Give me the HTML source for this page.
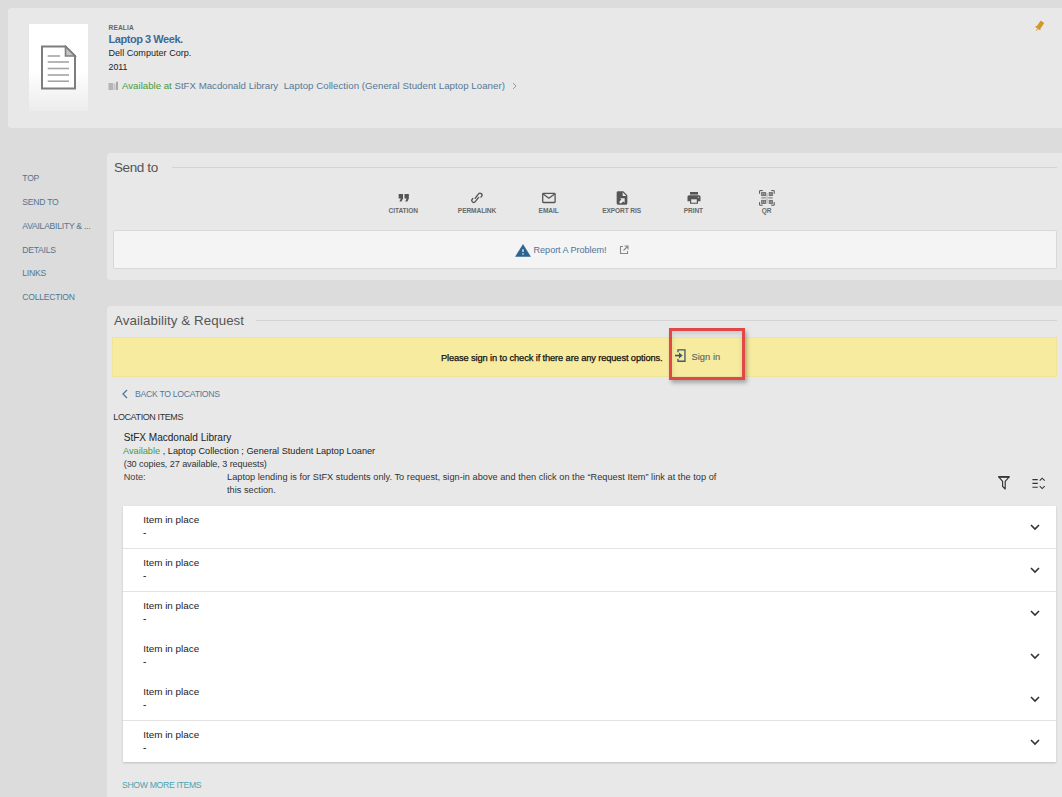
<!DOCTYPE html>
<html><head><meta charset="utf-8">
<style>
html,body{margin:0;padding:0;}
body{width:1062px;height:797px;overflow:hidden;background:#dcdcdc;position:relative;font-family:"Liberation Sans",sans-serif;color:#222;}
.a{position:absolute;white-space:nowrap;line-height:1;}
.card{position:absolute;background:#e8e8e8;border-radius:4px;}
.blue{color:#44709d;}
.green{color:#4a9a3a;}
.nav{position:absolute;left:22.3px;font-size:8.6px;color:#557590;line-height:1;letter-spacing:-0.25px;}
.ico{position:absolute;}
.lbl{position:absolute;font-size:6.6px;font-weight:bold;color:#6a6a6a;line-height:1;letter-spacing:-0.1px;transform:translateX(-50%);white-space:nowrap;}
.row{position:absolute;left:0;right:0;height:42px;}
.row .t{position:absolute;left:20.2px;top:9px;font-size:9.9px;line-height:1;color:#222;}
.row .d{position:absolute;left:20px;top:22px;font-size:10px;line-height:1;color:#222;}
.row svg{position:absolute;left:907px;top:18px;}
</style></head><body>

<!-- header card -->
<div class="card" style="left:8px;top:8px;width:1062px;height:120px;"></div>
<div style="position:absolute;left:29px;top:24px;width:59px;height:87px;background:linear-gradient(#fff 0%,#fff 55%,#ececec 100%);"></div>
<svg class="ico" style="left:40px;top:45px" width="37" height="46" viewBox="0 0 37 46">
  <path d="M2 1.5 H25.5 L35 11 V43.5 H2 Z" fill="#fff" stroke="#7d7d7d" stroke-width="2"/>
  <path d="M25.5 1.5 V11 H35 Z" fill="#c4c4c4" stroke="#7d7d7d" stroke-width="1.6"/>
  <g stroke="#a4a4a4" stroke-width="1.6">
    <line x1="7.7" y1="11" x2="20" y2="11"/>
    <line x1="7.7" y1="17" x2="29" y2="17"/>
    <line x1="7.7" y1="23.5" x2="29" y2="23.5"/>
    <line x1="7.7" y1="30" x2="29" y2="30"/>
    <line x1="7.7" y1="36.2" x2="29" y2="36.2"/>
  </g>
</svg>
<div class="a" style="left:108.5px;top:24.6px;font-size:6.6px;font-weight:bold;color:#666;letter-spacing:0.15px;">REALIA</div>
<div class="a" style="color:#3e6b98;left:108.5px;top:34px;font-size:11px;font-weight:bold;letter-spacing:-0.45px;">Laptop 3 Week.</div>
<div class="a" style="left:108.5px;top:49px;font-size:9.1px;letter-spacing:0px;">Dell Computer Corp.</div>
<div class="a" style="left:108.5px;top:63px;font-size:8.8px;">2011</div>
<svg class="ico" style="left:108px;top:81px" width="11" height="9" viewBox="0 0 11 9"><rect x="0.5" y="2" width="4.5" height="7" fill="#b4b4b4"/><rect x="5.5" y="2.5" width="2" height="6.5" fill="#c4c4c4"/><path d="M8 1 L10 0.5 V9 H8 Z" fill="#a8a8a8"/></svg>
<div class="a" style="left:122px;top:80.6px;font-size:9.7px;letter-spacing:-0.01px;"><span class="green">Available at </span><span style="color:#567896">StFX Macdonald Library</span></div>
<div class="a" style="left:283.7px;top:80.6px;font-size:9.7px;letter-spacing:0.03px;color:#567896;">Laptop Collection (General Student Laptop Loaner)</div>
<svg class="ico" style="left:512px;top:82px" width="5" height="8" viewBox="0 0 5 8"><path d="M1 1 L4 4 L1 7" fill="none" stroke="#999" stroke-width="1"/></svg>
<svg class="ico" style="left:1033px;top:19px" width="13" height="14" viewBox="0 0 13 14"><g transform="rotate(35 6.5 7)"><rect x="4.3" y="1.8" width="4.4" height="8" rx="0.8" fill="#d4982a"/><rect x="3.6" y="8.8" width="5.8" height="1.5" fill="#d4982a"/><rect x="6.1" y="9.8" width="0.9" height="3" fill="#d9a23a"/></g></svg>

<!-- left nav -->
<div class="nav" style="top:173.5px;">TOP</div>
<div class="nav" style="top:197.5px;">SEND TO</div>
<div class="nav" style="top:221.5px;">AVAILABILITY &amp; ...</div>
<div class="nav" style="top:245.5px;">DETAILS</div>
<div class="nav" style="top:269px;">LINKS</div>
<div class="nav" style="top:292.8px;">COLLECTION</div>

<!-- send to panel -->
<div class="card" style="left:107px;top:153px;width:1000px;height:127px;"></div>
<div class="a" style="left:114px;top:160.6px;font-size:13.5px;color:#555;letter-spacing:-0.4px;">Send to</div>
<div style="position:absolute;left:172px;top:167px;width:885px;height:1px;background:#d4d4d4;"></div>

<!-- icons -->
<!-- send-to icons -->
<svg class="ico" style="left:395.3px;top:188.9px" width="17.5" height="17.5" viewBox="0 0 24 24"><path fill="#555" d="M6 17h3l2-4V7H5v6h3zm8 0h3l2-4V7h-6v6h3z"/></svg>
<svg class="ico" style="left:468px;top:188px" width="20" height="20" viewBox="0 0 20 20">
  <g transform="translate(8.9 9.8) rotate(-52)" fill="none" stroke="#555" stroke-width="1.3" stroke-linecap="round">
    <path d="M-1.4 -1.1 L4.0 -1.1 A1.95 1.95 0 0 1 4.0 2.8 L3.0 2.8"/>
    <path d="M1.4 1.1 L-4.0 1.1 A1.95 1.95 0 0 1 -4.0 -2.8 L-3.0 -2.8"/>
  </g>
</svg>
<svg class="ico" style="left:541px;top:192px" width="16" height="12" viewBox="0 0 16 12">
  <rect x="1.7" y="1.3" width="12.4" height="9.2" rx="0.8" fill="none" stroke="#555" stroke-width="1.3"/>
  <path d="M2.2 2 L7.9 6.2 L13.6 2" fill="none" stroke="#555" stroke-width="1.3"/>
</svg>
<svg class="ico" style="left:614px;top:189.6px" width="16" height="16" viewBox="0 0 24 24"><path fill="#555" fill-rule="evenodd" d="M6,2C4.89,2 4,2.9 4,4V20A2,2 0 0,0 6,22H18A2,2 0 0,0 20,20V8L14,2Z M13,3.5L18.5,9H13Z M8.93,12.22H16V19.29L13.88,17.17L11.05,20H8.22V17.17L11.05,14.35Z"/></svg>
<svg class="ico" style="left:686px;top:191px" width="16" height="14" viewBox="0 0 16 14">
  <path d="M4 1 H12 V3.6 H4 Z" fill="#555"/>
  <path d="M3 4.3 H13 Q14.5 4.3 14.5 5.8 V10.3 H12 V12.8 H4 V10.3 H1.5 V5.8 Q1.5 4.3 3 4.3 Z" fill="#555"/>
  <rect x="5.2" y="8.3" width="5.6" height="3.4" fill="#e8e8e8"/>
  <circle cx="12.3" cy="6.3" r="0.6" fill="#e8e8e8"/>
</svg>
<svg class="ico" style="left:756px;top:187px" width="22" height="22" viewBox="0 0 22 22">
  <path d="M3.6 6.8 V3.6 H6.8 M15.2 3.6 H18.2 V6.8 M18.2 15.1 V18.2 H15.2 M6.8 18.2 H3.6 V15.1" fill="none" stroke="#555" stroke-width="1"/>
  <g fill="#a0a0a0" stroke="#6a6a6a" stroke-width="0.9">
    <rect x="5.6" y="5.6" width="4" height="3"/><rect x="13.2" y="5.6" width="3.2" height="3"/>
    <rect x="5.6" y="13.4" width="4" height="3"/><rect x="13.2" y="13.4" width="3.2" height="3"/>
  </g>
  <g fill="#666"><rect x="7" y="6.6" width="1.3" height="1.1"/><rect x="14.2" y="6.6" width="1.3" height="1.1"/><rect x="7" y="14.4" width="1.3" height="1.1"/><rect x="14.2" y="14.4" width="1.3" height="1.1"/></g>
  <path d="M5.4 10.9 H9.8 M12.2 10.9 H16.6" stroke="#888" stroke-width="1.3"/>
  <path d="M11 6 V16.5" stroke="#999" stroke-width="0.8"/>
</svg>

<div class="lbl" style="left:403.3px;top:207.5px;">CITATION</div>
<div class="lbl" style="left:477px;top:207.5px;">PERMALINK</div>
<div class="lbl" style="left:548.6px;top:207.5px;">EMAIL</div>
<div class="lbl" style="left:621.6px;top:207.5px;">EXPORT RIS</div>
<div class="lbl" style="left:693.4px;top:207.5px;">PRINT</div>
<div class="lbl" style="left:766.6px;top:207.5px;">QR</div>

<!-- report box -->
<div style="position:absolute;left:113px;top:230px;width:942px;height:37px;background:#f4f4f4;border:1px solid #d8d8d8;border-radius:2px;"></div>
<svg class="ico" style="left:515px;top:244px" width="16" height="13" viewBox="0 0 16 13"><path d="M8 0.5 L15.5 12.5 H0.5 Z" fill="#2d6290" stroke="#2d6290" stroke-width="0.5" stroke-linejoin="round"/><rect x="7.25" y="5.3" width="1.5" height="2.6" fill="#cfe6fa"/><rect x="7.25" y="9.3" width="1.5" height="1.4" fill="#cfe6fa"/></svg>
<div class="a" style="color:#50739a;left:533.6px;top:246px;font-size:9.1px;letter-spacing:-0.05px;">Report A Problem!</div>
<svg class="ico" style="left:619px;top:245px" width="10" height="10" viewBox="0 0 10 10"><path d="M4 1.5 H1.5 V8.5 H8.5 V6" fill="none" stroke="#888" stroke-width="1.1"/><path d="M5.5 1 H9 V4.5 M9 1 L4.5 5.5" fill="none" stroke="#888" stroke-width="1.1"/></svg>

<!-- availability panel -->
<div class="card" style="left:107px;top:306px;width:1000px;height:520px;"></div>
<div class="a" style="left:114px;top:313.7px;font-size:13.3px;color:#555;letter-spacing:0.08px;">Availability &amp; Request</div>
<div style="position:absolute;left:256px;top:320px;width:801px;height:1px;background:#d4d4d4;"></div>
<div style="position:absolute;left:112px;top:337px;width:945px;height:40px;background:#f6eb9e;border:1px solid #efe49a;box-sizing:border-box;"></div>
<div class="a" style="left:440.9px;top:354px;font-size:9.3px;color:#111;letter-spacing:-0.12px;-webkit-text-stroke:0.25px #111;">Please sign in to check if there are any request options.</div>
<div style="position:absolute;left:669px;top:328px;width:70px;height:46px;border:3px solid #e04848;box-shadow:2px 3px 4px rgba(0,0,0,0.28), inset 0 3px 5px rgba(0,0,0,0.12);"></div>
<svg class="ico" style="left:674px;top:348px" width="13" height="15" viewBox="0 0 13 15"><path d="M3.95 4.3 V1.85 H10.95 V13.25 H3.95 V10.8" fill="none" stroke="#3d5a66" stroke-width="1.3"/><path d="M1 7.55 H6" stroke="#3d5a66" stroke-width="1.7"/><path d="M5 4.5 L8.7 7.55 L5 10.6 Z" fill="#3d5a66"/></svg>
<div class="a" style="left:691.5px;top:353px;font-size:9.3px;color:#586a6c;letter-spacing:0.05px;-webkit-text-stroke:0.15px #586a6c;">Sign in</div>

<svg class="ico" style="left:121px;top:389px" width="8" height="10" viewBox="0 0 8 10"><path d="M6 1 L2 5 L6 9" fill="none" stroke="#55779a" stroke-width="1.3"/></svg>
<div class="a" style="color:#55779a;left:135px;top:390px;font-size:8.7px;letter-spacing:-0.3px;">BACK TO LOCATIONS</div>
<div class="a" style="left:113.3px;top:413px;font-size:9px;color:#333;letter-spacing:-0.4px;">LOCATION ITEMS</div>

<div class="a" style="left:123.7px;top:433px;font-size:10.1px;color:#222;letter-spacing:-0.03px;">StFX Macdonald Library</div>
<div class="a" style="left:123px;top:447px;font-size:9.2px;color:#222;letter-spacing:0px;"><span class="green">Available</span> , Laptop Collection ; General Student Laptop Loaner</div>
<div class="a" style="left:123.7px;top:460px;font-size:9.1px;color:#333;letter-spacing:-0.08px;">(30 copies, 27 available, 3 requests)</div>
<div class="a" style="left:123.7px;top:473px;font-size:9.2px;color:#444;">Note:</div>
<div class="a" style="left:227px;top:473px;font-size:9.2px;color:#333;letter-spacing:0.02px;">Laptop lending is for StFX students only. To request, sign-in above and then click on the “Request Item” link at the top of</div>
<div class="a" style="left:227px;top:486px;font-size:9.2px;color:#333;letter-spacing:0.02px;">this section.</div>

<svg class="ico" style="left:997px;top:475px" width="15" height="16" viewBox="0 0 15 16"><path d="M1.7 1.9 H12.2 L8.2 6.3 V14 L5.6 11.4 V6.3 Z" fill="none" stroke="#333" stroke-width="1.15" stroke-linejoin="round"/><path d="M1.5 1.9 H12.4" stroke="#333" stroke-width="1.6"/></svg>
<svg class="ico" style="left:1031px;top:476px" width="16" height="15" viewBox="0 0 16 15"><path d="M1.4 3.6 H6.8 M1.4 7.4 H6.8 M1.4 11.3 H6.8" stroke="#333" stroke-width="1.1"/><path d="M8.7 4.6 L11.2 2.2 L13.7 4.6 M8.7 10.2 L11.2 12.6 L13.7 10.2" fill="none" stroke="#333" stroke-width="1.1"/></svg>

<!-- items card -->
<div style="position:absolute;left:123px;top:506px;width:933px;height:256px;background:#fff;box-shadow:0 1px 2px rgba(0,0,0,0.18);">
  <div class="row" style="top:0;border-bottom:1px solid #e3e3e3;"><div class="t">Item in place</div><div class="d">-</div><svg width="10" height="7" viewBox="0 0 10 7"><path d="M1 1 L5 5 L9 1" fill="none" stroke="#333" stroke-width="1.6"/></svg></div>
  <div class="row" style="top:43px;border-bottom:1px solid #e3e3e3;"><div class="t">Item in place</div><div class="d">-</div><svg width="10" height="7" viewBox="0 0 10 7"><path d="M1 1 L5 5 L9 1" fill="none" stroke="#333" stroke-width="1.6"/></svg></div>
  <div class="row" style="top:86px;"><div class="t">Item in place</div><div class="d">-</div><svg width="10" height="7" viewBox="0 0 10 7"><path d="M1 1 L5 5 L9 1" fill="none" stroke="#333" stroke-width="1.6"/></svg></div>
  <div class="row" style="top:129px;"><div class="t">Item in place</div><div class="d">-</div><svg width="10" height="7" viewBox="0 0 10 7"><path d="M1 1 L5 5 L9 1" fill="none" stroke="#333" stroke-width="1.6"/></svg></div>
  <div class="row" style="top:172px;border-bottom:1px solid #e3e3e3;"><div class="t">Item in place</div><div class="d">-</div><svg width="10" height="7" viewBox="0 0 10 7"><path d="M1 1 L5 5 L9 1" fill="none" stroke="#333" stroke-width="1.6"/></svg></div>
  <div class="row" style="top:215px;"><div class="t">Item in place</div><div class="d">-</div><svg width="10" height="7" viewBox="0 0 10 7"><path d="M1 1 L5 5 L9 1" fill="none" stroke="#333" stroke-width="1.6"/></svg></div>
</div>
<div class="a" style="left:122px;top:781px;font-size:8.7px;color:#4ba3b3;letter-spacing:-0.35px;">SHOW MORE ITEMS</div>

</body></html>
